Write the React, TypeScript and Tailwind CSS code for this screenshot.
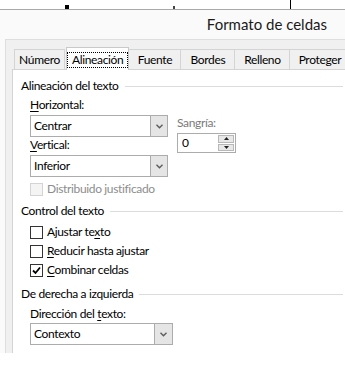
import { ReactNode } from 'react';

function Chevron() {
  return (
    <svg width="7" height="5" viewBox="0 0 7 5" className="block">
      <path d="M0.5 0.8 L3.5 3.8 L6.5 0.8" fill="none" stroke="#5c5c5c" strokeWidth="1.4" />
    </svg>
  );
}

function Select({ value, width, btn }: { value: string; width: string; btn: string }) {
  return (
    <div className={`flex h-[22px] ${width} border border-[#acacac] bg-white`}>
      <div className="flex-1 pl-[3px] leading-[20px] text-black">{value}</div>
      <div className={`flex ${btn} items-center justify-center border-l border-[#acacac] bg-[#e5e5e5]`}>
        <Chevron />
      </div>
    </div>
  );
}

function Check({ checked, disabled, children }: { checked?: boolean; disabled?: boolean; children: ReactNode }) {
  return (
    <div className="flex h-[16px] items-center">
      <div
        className={`flex h-[13px] w-[13px] items-center justify-center border ${
          disabled ? 'border-[#d4d4d4] bg-[#f4f4f4]' : 'border-[#333333] bg-white'
        }`}
      >
        {checked && (
          <svg width="9" height="9" viewBox="0 0 9 9">
            <path d="M1 4.5 L3.5 7 L8 1.5" fill="none" stroke="#000" strokeWidth="1.8" />
          </svg>
        )}
      </div>
      <span className={`ml-[4px] leading-[16px] ${disabled ? 'text-[#8d8d8d]' : 'text-black'}`}>{children}</span>
    </div>
  );
}

function Header({ title, className }: { title: string; className: string }) {
  return (
    <div className={`flex h-[16px] items-center pl-[8px] pr-[2px] ${className}`}>
      <span className="leading-[16px] text-black">{title}</span>
      <div className="ml-[6px] h-px flex-1 bg-[#dcdcdc]" />
    </div>
  );
}

const tabs = [
  { label: 'Número', w: 'w-[51px]', first: true },
  { label: 'Alineación', w: 'w-[70px]', active: true },
  { label: 'Fuente', w: 'w-[52px]' },
  { label: 'Bordes', w: 'w-[54px]' },
  { label: 'Relleno', w: 'w-[55px]' },
  { label: 'Proteger', w: 'w-[60px]' },
];

export default function App() {
  return (
    <div className="h-[371px] w-[345px] overflow-hidden bg-white font-['Lato','Noto_Sans',sans-serif] text-[12px] tracking-[-0.35px]">
      {/* strip of the sheet behind the dialog */}
      <div className="flex h-[9px] items-end">
        <div className="ml-[65px] h-[4px] w-[4px] bg-black" />
        <div className="ml-[104px] h-[3px] w-[2px] bg-[#444]" />
        <div className="ml-[115px] h-[9px] w-px bg-black" />
      </div>

      <div className="border-t border-[#a9a9a9] bg-[#fafafa]">
        <div className="h-[29px] pr-[18px] pt-[4px] text-right text-[15px] leading-[20px] tracking-normal text-[#1a1a1a]">
          Formato de celdas
        </div>

        <div className="ml-[5px] border-l border-t border-[#dedede] bg-[#f0f0f0] pl-[6px] pt-[7px]">
          <div className="flex h-[22px] items-end pl-[2px]">
            {tabs.map((t) =>
              t.active ? (
                <div
                  key={t.label}
                  className={`relative z-10 -mb-px ml-px flex h-[23px] ${t.w} items-start justify-center border-x border-t border-[#c9c9c9] bg-white pt-[4px]`}
                >
                  <span className="border border-dotted border-black px-[4px] leading-[14px] text-black">{t.label}</span>
                </div>
              ) : (
                <div
                  key={t.label}
                  className={`flex h-[20px] ${t.w} shrink-0 items-center justify-center border-r border-t border-[#d4d4d4] bg-[#f0f0f0] text-black ${
                    t.first ? 'border-l' : ''
                  }`}
                >
                  {t.label}
                </div>
              )
            )}
          </div>

          <div className="h-[284px] border-l border-t border-[#d4d4d4] bg-white">
            <Header title="Alineación del texto" className="mt-[8px]" />
            <div className="flex pl-[17px]">
              <div>
                <div className="mt-[3px] leading-[16px] text-black">
                  <span className="underline underline-offset-[2px]">H</span>orizontal:
                </div>
                <div className="mt-[2px]">
                  <Select value="Centrar" width="w-[138px]" btn="w-[17px]" />
                </div>
                <div className="leading-[16px] text-black">
                  <span className="underline underline-offset-[2px]">V</span>ertical:
                </div>
                <div className="mt-[2px]">
                  <Select value="Inferior" width="w-[138px]" btn="w-[17px]" />
                </div>
              </div>
              <div className="ml-[9px] mt-[21px]">
                <div className="leading-[16px] text-[#7a7a7a]">Sangría:</div>
                <div className="mt-[2px] flex h-[20px] w-[59px] border border-[#acacac] bg-white">
                  <div className="flex-1 pl-[4px] leading-[18px] text-black">0</div>
                  <div className="my-px mr-px flex w-[16px] flex-col gap-px">
                    <div className="flex flex-1 items-center justify-center border border-[#b8b8b8] bg-[#e8e8e8]">
                      <svg width="5" height="3" viewBox="0 0 5 3">
                        <path d="M0 3 L2.5 0 L5 3 Z" fill="#222" />
                      </svg>
                    </div>
                    <div className="flex flex-1 items-center justify-center border border-[#b8b8b8] bg-[#e8e8e8]">
                      <svg width="5" height="3" viewBox="0 0 5 3">
                        <path d="M0 0 L2.5 3 L5 0 Z" fill="#222" />
                      </svg>
                    </div>
                  </div>
                </div>
              </div>
            </div>
            <div className="mt-[4px] pl-[17px]">
              <Check disabled>Distribuido justificado</Check>
            </div>

            <Header title="Control del texto" className="mt-[6px]" />
            <div className="mt-[5px] flex flex-col gap-[3px] pl-[17px]">
              <Check>
                Ajustar te<span className="underline underline-offset-[2px]">x</span>to
              </Check>
              <Check>
                <span className="underline underline-offset-[2px]">R</span>educir hasta ajustar
              </Check>
              <Check checked>
                <span className="underline underline-offset-[2px]">C</span>ombinar celdas
              </Check>
            </div>

            <Header title="De derecha a izquierda" className="mt-[8px]" />
            <div className="mt-[4px] pl-[17px] leading-[16px] text-black">
              Dirección del <span className="underline underline-offset-[2px]">t</span>exto:
            </div>
            <div className="mt-[1px] pl-[17px]">
              <Select value="Contexto" width="w-[143px]" btn="w-[18px]" />
            </div>
          </div>
        </div>
      </div>
    </div>
  );
}
